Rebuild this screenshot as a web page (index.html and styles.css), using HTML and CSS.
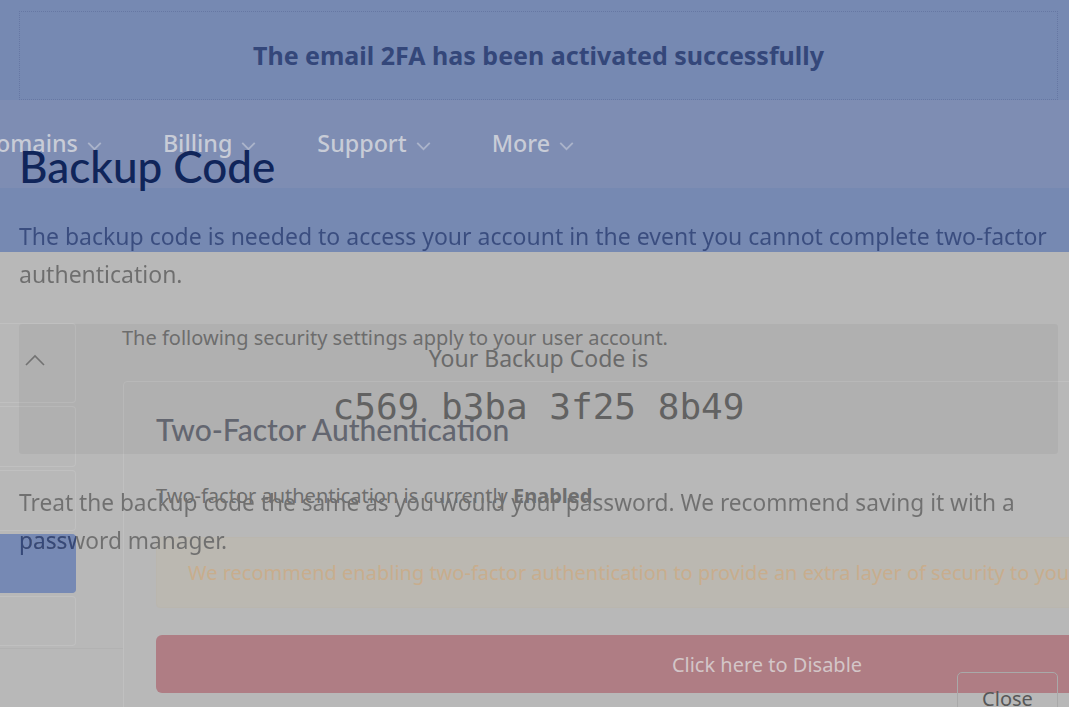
FILE: index.html
```html
<!DOCTYPE html>
<html lang="en">
<head>
<meta charset="utf-8">
<title>Backup Code</title>
<link rel="stylesheet" href="styles.css">
</head>
<body>
<div class="page">
  <div class="topbar"></div>
  <nav class="nav">
    <span class="nav-item">Domains <svg class="chev" viewBox="0 0 12 8"><path d="M1 1.5 6 6.5 11 1.5"/></svg></span>
    <span class="nav-item">Billing <svg class="chev" viewBox="0 0 12 8"><path d="M1 1.5 6 6.5 11 1.5"/></svg></span>
    <span class="nav-item">Support <svg class="chev" viewBox="0 0 12 8"><path d="M1 1.5 6 6.5 11 1.5"/></svg></span>
    <span class="nav-item">More <svg class="chev" viewBox="0 0 12 8"><path d="M1 1.5 6 6.5 11 1.5"/></svg></span>
  </nav>
  <div class="pagehead"></div>
  <div class="content">
    <aside class="sidebar">
      <div class="side-list">
        <div class="side-item tall"><svg class="up" viewBox="0 0 20 12"><path d="M1 11 10 2 19 11"/></svg></div>
        <div class="side-item"></div>
        <div class="side-item"></div>
        <div class="side-item active"></div>
        <div class="side-item short"></div>
      </div>
      <div class="side-rule"></div>
    </aside>
    <main class="main">
      <p class="intro">The following security settings apply to your user account.</p>
      <section class="card">
        <h3 class="card-title">Two-Factor Authentication</h3>
        <p class="status">Two-factor authentication is currently <strong>Enabled</strong>.</p>
        <div class="warning">We recommend enabling two-factor authentication to provide an extra layer of security to your account.</div>
        <button class="btn-disable">Click here to Disable</button>
      </section>
    </main>
  </div>
</div>

<div class="modal">
  <div class="alert">The email 2FA has been activated successfully</div>
  <h2 class="modal-title">Backup Code</h2>
  <p class="lead">The backup code is needed to access your account in the event you cannot complete two-factor authentication.</p>
  <div class="code-box">
    <div class="code-label">Your Backup Code is</div>
    <div class="code">c569 b3ba 3f25 8b49</div>
  </div>
  <p class="note">Treat the backup code the same as you would your password. We recommend saving it with a password manager.</p>
  <div class="modal-footer">
    <button class="btn-close">Close</button>
  </div>
</div>
</body>
</html>
```
FILE: styles.css
```css
* { box-sizing: border-box; }
html, body {
  margin: 0;
  padding: 0;
}
body {
  width: 1069px;
  height: 707px;
  overflow: hidden;
  position: relative;
  background: #b8b8b8;
  font-family: "Noto Sans", "Open Sans", sans-serif;
}

/* ---------- page underneath ---------- */
.topbar {
  height: 100px;
  background: #7689b2;
}
.nav {
  height: 88px;
  background: #7e8db3;
  display: flex;
  align-items: center;
  gap: 61px;
  margin-left: -21px;
  padding-bottom: 2px;
}
.nav-item {
  display: flex;
  align-items: center;
  gap: 9px;
  font-size: 23.3px;
  font-weight: 500;
  color: #c8ccd7;
  white-space: nowrap;
}
.chev {
  width: 15px;
  height: 10px;
  margin-top: 6px;
  fill: none;
  stroke: #aab3ca;
  stroke-width: 1.5;
}
.pagehead {
  height: 64px;
  background: #7689b2;
}
.content {
  display: flex;
  background: #b8b8b8;
}
.sidebar {
  width: 123px;
  flex-shrink: 0;
  padding-top: 71px;
}
.side-list {
  display: flex;
  flex-direction: column;
  gap: 3px;
  margin-left: -12px;
  width: 88px;
}
.side-item {
  height: 61px;
  border: 1px solid #c0c0c0;
  border-left: none;
  border-radius: 0 4px 4px 0;
  display: flex;
  align-items: center;
  justify-content: center;
}
.side-item.tall { height: 80px; }
.side-item.short { height: 50px; }
.side-item.active {
  background: #7689b4;
  border-color: #7689b4;
  height: 59px;
}
.up {
  width: 20px;
  height: 12px;
  margin: 0 0 6px 6px;
  fill: none;
  stroke: #777;
  stroke-width: 1.6;
}
.side-rule {
  height: 1px;
  background: #b2b2b2;
  margin-top: 2px;
}
.main {
  flex: 1;
  min-width: 0;
  padding-top: 73px;
}
.intro {
  margin: 0 0 0 -1px;
  font-size: 20px;
  line-height: 25px;
  color: #727272;
}
.card {
  margin-top: 31px;
  width: 1288px;
  border: 1px solid #c0c0c0;
  border-radius: 4px;
  padding: 30px 32px;
}
.card-title {
  margin: 0;
  font-family: "Lato", sans-serif;
  font-weight: 500;
  font-size: 30px;
  line-height: 35px;
  color: #686b75;
}
.status {
  margin: 37px 0 0;
  font-size: 20px;
  line-height: 24px;
  color: #6e6e6e;
}
.status strong { font-weight: 700; }
.warning {
  margin-top: 29px;
  height: 71px;
  padding: 0 31px;
  line-height: 70px;
  background: #bbb8b1;
  border: 1px solid #bab6ae;
  border-radius: 4px;
  font-size: 20px;
  color: #c8ad8d;
  white-space: nowrap;
}
.btn-disable {
  display: block;
  margin-top: 27px;
  width: 100%;
  height: 58px;
  border: none;
  border-radius: 6px;
  background: #af7d84;
  color: #d3c6c8;
  font-family: "Noto Sans", sans-serif;
  font-size: 20px;
}

/* ---------- modal layer ---------- */
.modal {
  position: absolute;
  inset: 0;
  padding: 11px 11px 0 19px;
}
.alert {
  height: 89px;
  border: 1px dotted #6677a3;
  display: flex;
  align-items: center;
  justify-content: center;
  font-size: 25px;
  font-weight: 700;
  color: #34477a;
  padding-bottom: 2px;
}
.modal-title {
  margin: 40px 0 0;
  font-family: "Lato", sans-serif;
  font-weight: 500;
  font-size: 44px;
  line-height: 52px;
  color: #10255a;
}
.lead {
  margin: 25px 0 0;
  font-size: 23px;
  line-height: 38px;
  background: linear-gradient(to bottom, #3a4d7f 34px, #6e6e6e 34px);
  -webkit-background-clip: text;
  background-clip: text;
  color: transparent;
}
.code-box {
  margin-top: 31px;
  height: 130px;
  background: rgba(0, 0, 0, 0.04);
  border-radius: 3px;
  text-align: center;
  padding-top: 20px;
}
.code-label {
  font-size: 23px;
  line-height: 28px;
  color: #6a6a6a;
}
.code {
  margin-top: 11px;
  font-family: "DejaVu Sans Mono", monospace;
  font-size: 36px;
  line-height: 48px;
  color: #626262;
}
.note {
  margin: 30px 0 0;
  font-size: 22.7px;
  line-height: 38px;
  background: linear-gradient(#35487a, #35487a) -19px 47px / 76px 59px no-repeat, #707070;
  -webkit-background-clip: text;
  background-clip: text;
  color: transparent;
}
.modal-footer {
  display: flex;
  justify-content: flex-end;
  margin-top: 112px;
}
.btn-close {
  width: 101px;
  height: 50px;
  border: 1px solid #a9a9a9;
  border-radius: 5px;
  background: transparent;
  font-family: "Noto Sans", sans-serif;
  font-size: 20px;
  color: #575757;
  padding: 12px 0 0;
  align-self: flex-start;
  display: flex;
  justify-content: center;
}
```
